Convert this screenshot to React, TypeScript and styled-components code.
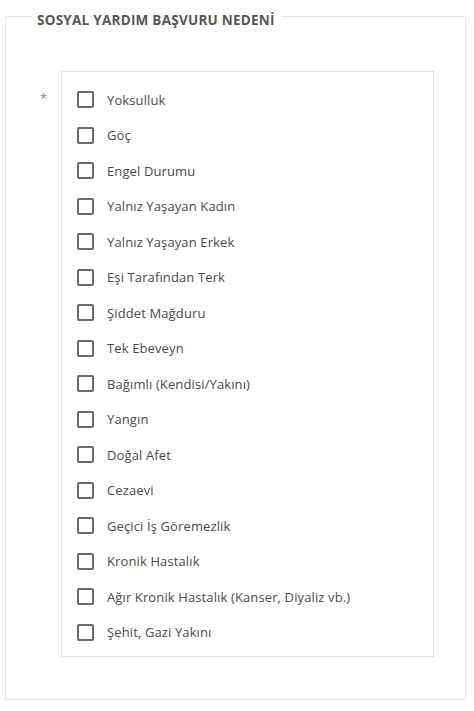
import React from "react";
import styled, { createGlobalStyle } from "styled-components";

const Global = createGlobalStyle`
  html, body { margin: 0; padding: 0; background: #fff; }
  body { font-family: "Open Sans", "Liberation Sans", sans-serif; }
  * { box-sizing: border-box; }
`;

const Fieldset = styled.fieldset`
  margin: 4px 0 0 5px;
  width: 461px;
  height: 696px;
  padding: 0;
  border: 1px solid #e4e4e4;
  box-shadow: 0 1px 2px rgba(0, 0, 0, 0.06);
  min-width: 0;
`;

const Legend = styled.legend`
  margin-left: 26px;
  padding: 7px 7px 0 5px;
  font-size: 13.5px;
  line-height: 18px;
  font-weight: 700;
  color: #575757;
  letter-spacing: 0.25px;
`;

const FieldRow = styled.div`
  display: flex;
  align-items: flex-start;
  margin-top: 42px;
`;

const Required = styled.span`
  width: 55px;
  padding: 18px 0 0 34px;
  font-size: 13px;
  line-height: 18px;
  color: #8a8a8a;
`;

const OptionsBox = styled.div`
  width: 373px;
  border: 1px solid #e2e2e2;
  padding: 10px 0 6px 15px;
  display: flex;
  flex-direction: column;
`;

const Option = styled.label`
  display: flex;
  align-items: center;
  height: 35.53px;
  gap: 13px;
  cursor: pointer;
`;

const Box = styled.span`
  width: 17px;
  height: 17px;
  border: 2px solid #6a6a6a;
  border-radius: 2px;
  flex: none;
  background: #fff;
`;

const OptionText = styled.span`
  font-size: 13px;
  line-height: 18px;
  letter-spacing: 0.12px;
  color: #4a4a4a;
`;

const options = [
  "Yoksulluk",
  "Göç",
  "Engel Durumu",
  "Yalnız Yaşayan Kadın",
  "Yalnız Yaşayan Erkek",
  "Eşi Tarafından Terk",
  "Şiddet Mağduru",
  "Tek Ebeveyn",
  "Bağımlı (Kendisi/Yakını)",
  "Yangın",
  "Doğal Afet",
  "Cezaevi",
  "Geçici İş Göremezlik",
  "Kronik Hastalık",
  "Ağır Kronik Hastalık (Kanser, Diyaliz vb.)",
  "Şehit, Gazi Yakını",
];

export default function App() {
  return (
    <>
      <Global />
      <Fieldset>
        <Legend>SOSYAL YARDIM BAŞVURU NEDENİ</Legend>
        <FieldRow>
          <Required>*</Required>
          <OptionsBox>
            {options.map((o) => (
              <Option key={o}>
                <Box />
                <OptionText>{o}</OptionText>
              </Option>
            ))}
          </OptionsBox>
        </FieldRow>
      </Fieldset>
    </>
  );
}
